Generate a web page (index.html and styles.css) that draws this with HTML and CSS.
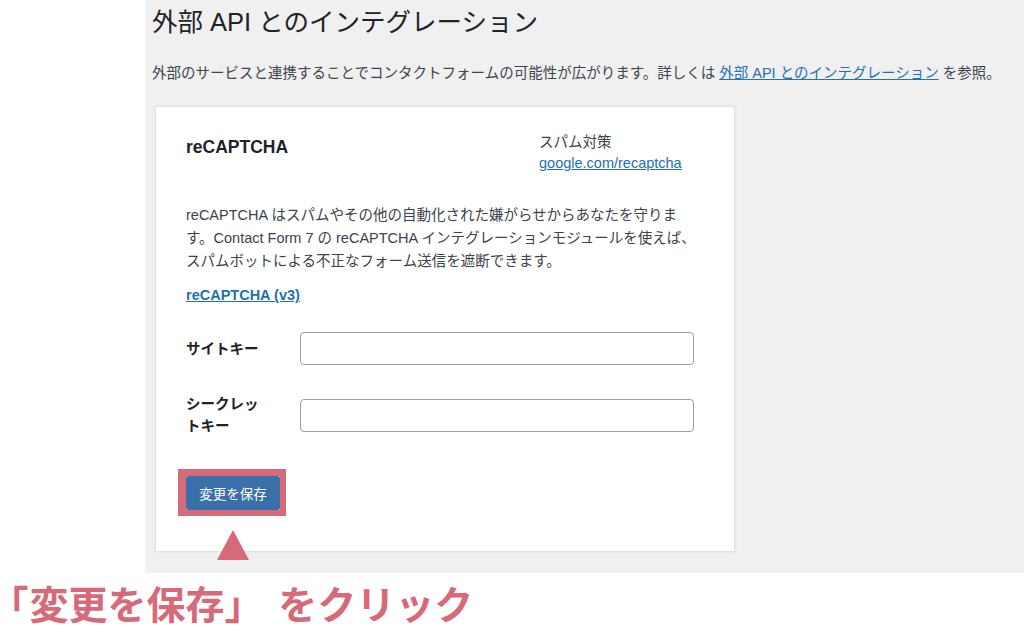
FILE: index.html
```html
<!DOCTYPE html>
<html lang="ja">
<head>
<meta charset="utf-8">
<title>外部 API とのインテグレーション</title>
<link rel="stylesheet" href="styles.css">
</head>
<body>
<div class="screen">
  <div class="gutter"></div>
  <main class="content">
    <h1 class="page-title">外部 API とのインテグレーション</h1>
    <p class="desc">外部のサービスと連携することでコンタクトフォームの可能性が広がります。詳しくは <a href="#">外部 API とのインテグレーション</a> を参照。</p>
    <section class="card">
      <div class="card-head">
        <h2 class="card-title">reCAPTCHA</h2>
        <div class="infobox">
          <div>スパム対策</div>
          <a href="#">google.com/recaptcha</a>
        </div>
      </div>
      <p class="card-text">reCAPTCHA はスパムやその他の自動化された嫌がらせからあなたを守ります。Contact Form 7 の reCAPTCHA インテグレーションモジュールを使えば、スパムボットによる不正なフォーム送信を遮断できます。</p>
      <p class="version"><a href="#">reCAPTCHA (v3)</a></p>
      <div class="form">
        <div class="row">
          <label class="label">サイトキー</label>
          <input class="field" type="text">
        </div>
        <div class="row">
          <label class="label">シークレットキー</label>
          <input class="field" type="text">
        </div>
      </div>
      <div class="actions">
        <span class="frame"><button class="btn" type="button">変更を保存</button></span>
        <span class="pointer"></span>
      </div>
    </section>
  </main>
</div>
<div class="caption"><span class="bracket">「</span>変更を保存」 をクリック</div>
</body>
</html>
```
FILE: styles.css
```css
html, body {
  margin: 0;
  padding: 0;
  background: #ffffff;
}
body {
  width: 1024px;
  height: 633px;
  overflow: hidden;
  font-family: "Liberation Sans", "Noto Sans CJK JP", sans-serif;
  color: #3c434a;
}
.screen {
  display: flex;
}
.gutter {
  width: 145px;
  flex: none;
}
.content {
  flex: 1;
  background: #f0f0f1;
  padding: 6px 0 21px 7px;
}
.page-title {
  margin: 0;
  font-size: 25.5px;
  font-weight: 400;
  line-height: 33px;
  color: #1d2327;
}
.desc {
  margin: 23px 0 0;
  font-size: 14.5px;
  line-height: 22px;
}
a {
  color: #2271b1;
  text-decoration: underline;
}
.card {
  margin: 22px 0 0 3px;
  width: 518px;
  background: #fff;
  border: 1px solid #e1e1e3;
  box-shadow: 0 0 4px rgba(0, 0, 0, 0.05);
  padding: 25px 30px 35px;
  font-size: 14.5px;
}
.card-head {
  display: flex;
  align-items: flex-start;
}
.card-title {
  flex: 1;
  margin: 4px 0 0;
  font-size: 17.5px;
  line-height: 22px;
  font-weight: 700;
  color: #1d2327;
}
.infobox {
  width: 165px;
  line-height: 21px;
}
.card-text {
  margin: 30px 0 0;
  line-height: 23px;
}
.version {
  margin: 11px 0 0;
  line-height: 22px;
  font-weight: 700;
}
.form {
  margin-top: 26px;
  display: flex;
  flex-direction: column;
  gap: 28px;
}
.row {
  display: flex;
  align-items: center;
}
.label {
  width: 82px;
  margin-right: 32px;
  font-weight: 700;
  line-height: 22px;
  color: #1d2327;
}
.field {
  width: 394px;
  height: 33px;
  box-sizing: border-box;
  margin: 0;
  border: 1px solid #9a9ca0;
  border-radius: 4px;
  background: #fff;
}
.actions {
  position: relative;
  display: block;
  width: max-content;
  margin-top: 32px;
  margin-left: -8px;
}
.frame {
  display: block;
  border: 7px solid #d76a79;
  border-left-width: 8px;
  border-right-width: 6px;
  border-bottom-width: 6px;
}
.btn {
  display: block;
  height: 34px;
  width: 94px;
  padding: 0;
  border: 0;
  border-radius: 2px;
  background: #3a6faa;
  color: #fff;
  font-family: "Noto Sans CJK JP", sans-serif;
  font-size: 13.5px;
}
.pointer {
  position: absolute;
  left: 55px;
  top: 61px;
  margin-left: -16px;
  width: 0;
  height: 0;
  border-left: 16px solid transparent;
  border-right: 16px solid transparent;
  border-bottom: 30px solid #d76a79;
}
.caption {
  margin-top: 6px;
  padding-left: 9px;
  word-spacing: 6px;
  font-family: "Noto Sans CJK JP", sans-serif;
  font-size: 39px;
  line-height: 46px;
  font-weight: 700;
  color: #d76a79;
}
.bracket {
  font-feature-settings: "halt";
  margin-right: 1px;
}
```
